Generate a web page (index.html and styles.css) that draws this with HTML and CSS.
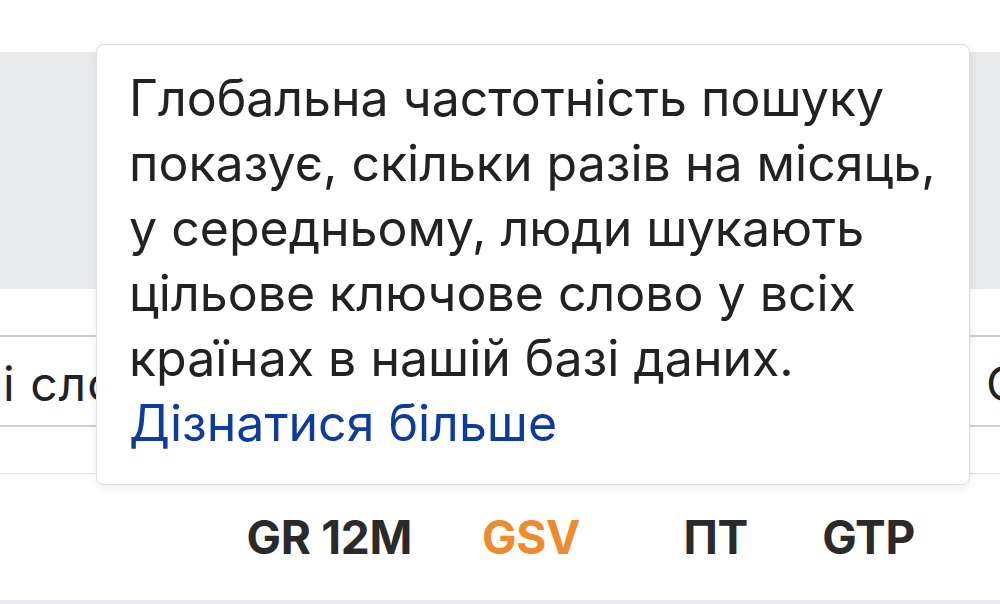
FILE: index.html
```html
<!DOCTYPE html>
<html lang="uk">
<head>
<meta charset="utf-8">
<link rel="stylesheet" href="styles.css">
</head>
<body>
<div class="page">
  <div class="top"></div>
  <div class="band"></div>
  <div class="gap"></div>
  <div class="search-row">
    <span class="field-left">і слова</span>
    <span class="field-right">С</span>
  </div>
  <div class="sub-row"></div>
  <div class="head-row">
    <span class="col"></span>
    <span class="col">GR 12M</span>
    <span class="col accent">GSV</span>
    <span class="col">ПТ</span>
    <span class="col">GTP</span>
  </div>
  <div class="bottom"></div>

  <div class="tooltip">
    <p class="tip-text">Глобальна частотність пошуку<br>показує, скільки разів на місяць,<br>у середньому, люди шукають<br>цільове ключове слово у всіх<br>країнах в нашій базі даних.</p>
    <a class="tip-link" href="#">Дізнатися більше</a>
  </div>
</div>
</body>
</html>
```
FILE: styles.css
```css
* { box-sizing: border-box; }
html, body { margin: 0; padding: 0; }
body {
  width: 1000px;
  height: 604px;
  overflow: hidden;
  background: #fff;
  font-family: Inter, "Noto Sans", "Liberation Sans", sans-serif;
  color: #222;
}
.page {
  position: relative;
  width: 1000px;
  height: 604px;
  overflow: hidden;
  display: flex;
  flex-direction: column;
}
.top { height: 52px; flex: none; }
.band { height: 237px; background: #e9eaec; flex: none; }
.gap { height: 46px; flex: none; }
.search-row {
  flex: none;
  height: 92px;
  border-top: 2px solid #cfcfcf;
  border-bottom: 2px solid #cfcfcf;
  display: flex;
  align-items: center;
  justify-content: space-between;
  font-size: 48px;
  letter-spacing: 1px;
  color: #222;
  white-space: nowrap;
  overflow: hidden;
  padding-left: 3px;
  padding-top: 4px;
}
.field-right { margin-right: -22px; }
.sub-row {
  flex: none;
  height: 47px;
  border-bottom: 1px solid #e2e2e2;
}
.head-row {
  flex: none;
  height: 126px;
  display: grid;
  grid-template-columns: 1fr 168px 168px 168px 167px;
  padding-right: 85px;
  align-items: center;
  font-weight: 700;
  font-size: 46px;
  color: #2a2a2a;
  letter-spacing: -0.3px;
}
.col { text-align: right; }
.accent { color: #ef8b2c; }
.bottom { flex: 1; background: #e8e9ec; }

.tooltip {
  position: absolute;
  left: 96px;
  top: 44px;
  width: 874px;
  height: 441px;
  background: #fff;
  border: 1px solid #dcdcdc;
  border-radius: 8px;
  box-shadow: 0 3px 10px rgba(0, 0, 0, 0.08);
  padding: 21px 32px 0 32px;
  white-space: nowrap;
}
.tip-text {
  margin: 0;
  font-size: 50px;
  line-height: 65px;
  color: #222;
}
.tip-link {
  display: block;
  font-size: 50px;
  line-height: 65px;
  color: #0e3c9e;
  text-decoration: none;
}
```
